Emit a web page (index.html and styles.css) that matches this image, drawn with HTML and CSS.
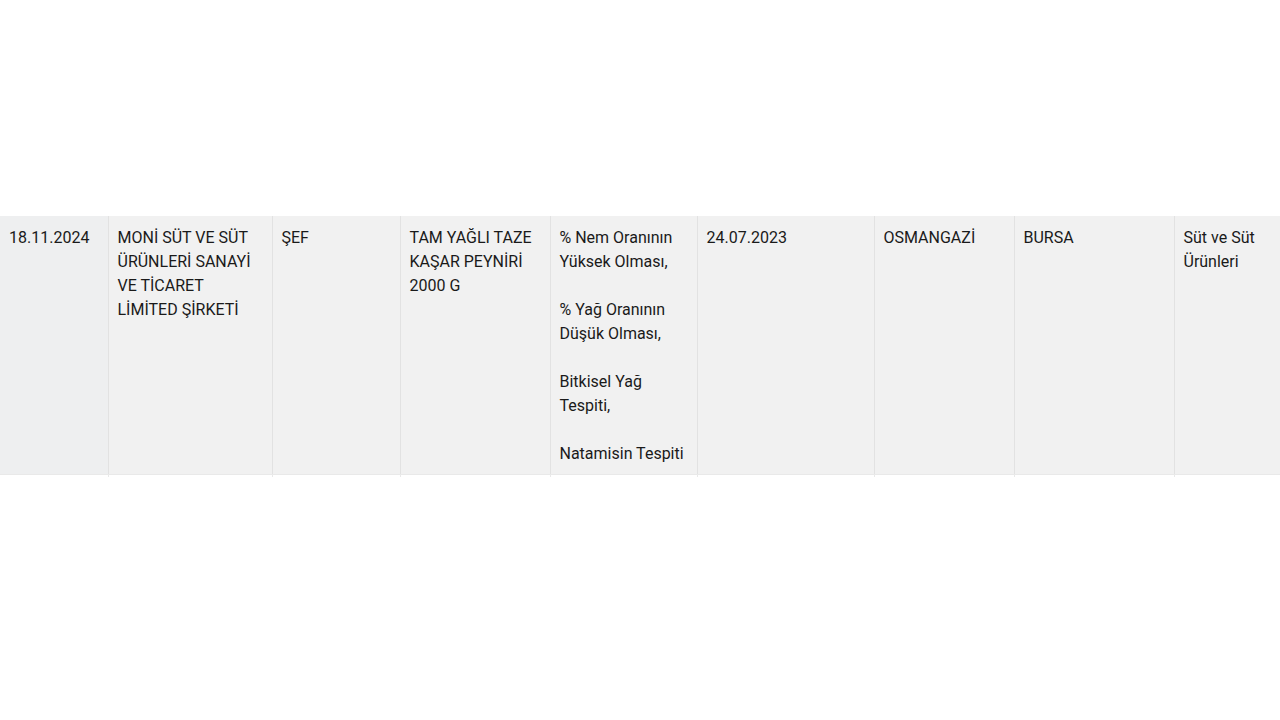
FILE: index.html
```html
<!DOCTYPE html>
<html lang="tr">
<head>
<meta charset="utf-8">
<link rel="stylesheet" href="styles.css">
</head>
<body>
<div class="wrap">
<table class="grid">
  <colgroup>
    <col class="c1"><col class="c2"><col class="c3"><col class="c4"><col class="c5"><col class="c6"><col class="c7"><col class="c8"><col class="c9">
  </colgroup>
  <tbody>
    <tr class="row">
      <td class="first">18.11.2024</td>
      <td>MONİ SÜT VE SÜT ÜRÜNLERİ SANAYİ VE TİCARET LİMİTED ŞİRKETİ</td>
      <td>ŞEF</td>
      <td>TAM YAĞLI TAZE KAŞAR PEYNİRİ 2000 G</td>
      <td>% Nem Oranının Yüksek Olması,<br><br>% Yağ Oranının Düşük Olması,<br><br>Bitkisel Yağ Tespiti,<br><br>Natamisin Tespiti</td>
      <td>24.07.2023</td>
      <td>OSMANGAZİ</td>
      <td>BURSA</td>
      <td>Süt ve Süt Ürünleri</td>
    </tr>
    <tr class="tail">
      <td class="first"></td><td></td><td></td><td></td><td></td><td></td><td></td><td></td><td></td>
    </tr>
  </tbody>
</table>
</div>
</body>
</html>
```
FILE: styles.css
```css
html, body {
  margin: 0;
  padding: 0;
  background: #ffffff;
}
body {
  font-family: Roboto, "Liberation Sans", sans-serif;
  font-size: 16px;
  line-height: 24px;
  color: #1a1a1a;
  overflow: hidden;
  width: 1280px;
  height: 720px;
}
.wrap {
  padding-top: 216px;
  width: 1280px;
  overflow: hidden;
}
.grid {
  border-collapse: collapse;
  table-layout: fixed;
  width: 1300px;
}
.c1 { width: 108px; }
.c2 { width: 164px; }
.c3 { width: 128px; }
.c4 { width: 150px; }
.c5 { width: 147px; }
.c6 { width: 177px; }
.c7 { width: 140px; }
.c8 { width: 160px; }
.c9 { width: 126px; }
.row td {
  background: #f1f1f1;
  vertical-align: top;
  padding: 10px 8px 8px 9px;
  border-left: 1px solid #e2e2e2;
  border-bottom: 1px solid #e9e9e9;
}
.row td.first {
  background: #eeeff0;
  border-left: none;
}
.tail td {
  height: 2px;
  padding: 0;
  border-left: 1px solid #e9e9e9;
}
.tail td.first {
  border-left: none;
}
```
